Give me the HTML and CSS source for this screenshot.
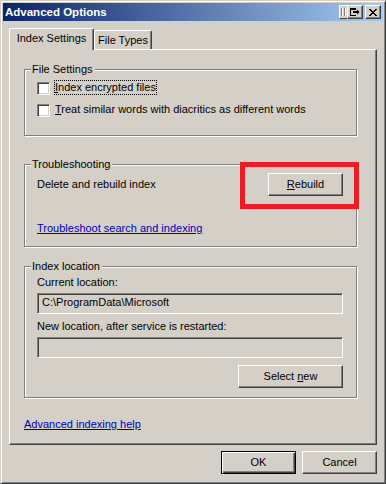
FILE: index.html
```html
<!DOCTYPE html>
<html lang="en">
<head>
    <meta charset="UTF-8">
    <title>Advanced Options</title>
    <link rel="stylesheet" href="styles.css">
</head>
<body>
    <div class="window">
        <div class="titlebar">
            <span class="title">Advanced Options</span>
            <div class="caption">
                <span class="cap-btn cap-part">
                    <svg width="5" height="8" viewBox="0 0 5 8"><path d="M0 0h1v8H0zM3 0h1v8H3z" fill="#808080"/><path d="M1 0h1v8H1zM4 0h1v8H4z" fill="#fff"/></svg>
                </span>
                <span class="cap-btn">
                    <svg width="10" height="8" viewBox="0 0 10 8"><path d="M0 0h6v2H0zM0 0h1v8H0zM0 7h6v1H0zM3 3h4v2H3zM7 1.5L9.5 4 7 6.5z" fill="#000"/></svg>
                </span>
                <span class="cap-btn cap-close">
                    <svg width="8" height="7" viewBox="0 0 8 7"><path d="M0 0h2v1H0zM6 0h2v1H6zM1 1h2v1H1zM5 1h2v1H5zM2 2h4v1H2zM3 3h2v1H3zM2 4h4v1H2zM1 5h2v1H1zM5 5h2v1H5zM0 6h2v1H0zM6 6h2v1H6z" fill="#000"/></svg>
                </span>
            </div>
        </div>

        <div class="client">
            <div class="tabs">
                <div class="tab active">Index Settings</div>
                <div class="tab">File Types</div>
            </div>

            <div class="panel">
                <fieldset class="group files">
                    <legend>File Settings</legend>
                    <div class="group-body">
                        <div class="check">
                            <span class="box"></span>
                            <span class="label focus"><u>I</u>ndex encrypted files</span>
                        </div>
                        <div class="check">
                            <span class="box"></span>
                            <span class="label"><u>T</u>reat similar words with diacritics as different words</span>
                        </div>
                    </div>
                </fieldset>

                <fieldset class="group trouble">
                    <legend>Troubleshooting</legend>
                    <div class="group-body">
                        <div class="rebuild-row">
                            <span>Delete and rebuild index</span>
                            <span class="marked">
                                <button class="btn rebuild"><u>R</u>ebuild</button>
                                <span class="mark"></span>
                            </span>
                        </div>
                        <a class="link trouble-link" href="#">Troubleshoot search and indexing</a>
                    </div>
                </fieldset>

                <fieldset class="group location">
                    <legend>Index location</legend>
                    <div class="group-body">
                        <div class="field-label">Current location:</div>
                        <div class="field">C:\ProgramData\Microsoft</div>
                        <div class="field-label second">New location, after service is restarted:</div>
                        <div class="field"></div>
                        <div class="select-row">
                            <button class="btn select">Select <u>n</u>ew</button>
                        </div>
                    </div>
                </fieldset>

                <a class="link help-link" href="#">Advanced indexing help</a>
            </div>

            <div class="actions">
                <button class="btn default">OK</button>
                <button class="btn">Cancel</button>
            </div>
        </div>
    </div>
</body>
</html>
```

FILE: styles.css
```css
* { box-sizing: border-box; }
body { margin: 0; font-family: "Liberation Sans", Arial, sans-serif; font-size: 11px; line-height: 13px; color: #000; background: #d4d0c8; }

.window {
    width: 386px;
    height: 484px;
    padding: 2px;
    background: #d4d0c8;
    border: 1px solid;
    border-color: #d4d0c8 #404040 #404040 #d4d0c8;
    box-shadow: inset 1px 1px #fff, inset -1px -1px #808080;
}

/* title bar */
.titlebar {
    height: 18px;
    display: flex;
    align-items: center;
    justify-content: space-between;
    padding: 0 2px 0 2px;
    background: linear-gradient(to right, #0a246a, #a6caf0);
}
.title { color: #fff; font-weight: bold; font-size: 11.5px; line-height: 14px; }
.caption { display: flex; align-items: center; }
.cap-btn {
    width: 16px;
    height: 14px;
    display: flex;
    align-items: center;
    justify-content: center;
    background: #d4d0c8;
    border: 1px solid;
    border-color: #fff #404040 #404040 #fff;
    box-shadow: inset -1px -1px #808080;
}
.cap-part { width: 8px; border-right: none; box-shadow: none; justify-content: flex-start; padding-left: 1px; }
.cap-close { margin-left: 2px; }

/* client area */
.client { height: 460px; padding: 7px 6px 7px 6px; }

.tabs { display: flex; align-items: flex-end; height: 21px; }
.tab {
    height: 19px;
    padding-top: 3px;
    text-align: center;
    background: #d4d0c8;
    border: 1px solid;
    border-bottom: none;
    border-color: #fff #404040 #404040 #fff;
    border-radius: 2px 2px 0 0;
    box-shadow: inset -1px 0 #808080;
}
.tab.active {
    width: 85px;
    height: 22px;
    margin-bottom: -1px;
    position: relative;
    z-index: 1;
}
.tab:not(.active) { width: 58px; }

.panel {
    height: 396px;
    padding: 13px 19px 0 14px;
    border: 1px solid;
    border-color: #fff #404040 #404040 #fff;
    box-shadow: inset -1px -1px #808080;
}

/* group boxes */
.group {
    margin: 0;
    padding: 0;
    min-width: 0;
    border: 1px solid #808080;
    box-shadow: inset 1px 1px #fff, 1px 1px #fff;
}
.group legend {
    margin-left: 6px;
    padding: 0 2px 0 1px;
    line-height: 13px;
    background: #d4d0c8;
}
.group-body { padding: 0 13px 0 12px; }

.files { height: 73px; }
.files .group-body { padding-top: 6px; }
.trouble { height: 89px; margin-top: 22px; }
.trouble .group-body { padding-top: 2px; }
.location { height: 138px; margin-top: 13px; }
.location .group-body { padding-top: 3px; }

.check { display: flex; align-items: center; height: 13px; }
.check + .check { margin-top: 9px; }
.box {
    width: 13px;
    height: 13px;
    background: #fff;
    border: 1px solid;
    border-color: #808080 #fff #fff #808080;
    box-shadow: inset 1px 1px #404040, inset -1px -1px #d4d0c8;
}
.label { margin-left: 5px; margin-top: -2px; }
.label.focus { outline: 1px dotted #000; outline-offset: 0; }

.rebuild-row { display: flex; align-items: center; justify-content: space-between; }
.marked { position: relative; display: flex; }
.mark {
    position: absolute;
    top: -11px;
    left: -28px;
    right: -16px;
    bottom: -13px;
    border: 5px solid #ed1c24;
}

.link { color: #0000b8; text-decoration: underline; }
.trouble-link { display: inline-block; margin-top: 26px; }
.help-link { display: inline-block; margin-top: 20px; }

.field-label.second { margin-top: 6px; }
.field {
    height: 21px;
    margin-top: 4px;
    padding: 0 4px;
    line-height: 17px;
    border: 1px solid;
    border-color: #808080 #fff #fff #808080;
    box-shadow: inset 1px 1px #404040, inset -1px -1px #d4d0c8;
}
.select-row { display: flex; justify-content: flex-end; margin-top: 7px; }

/* buttons */
.btn {
    width: 75px;
    height: 23px;
    padding: 0;
    font: inherit;
    color: #000;
    background: #d4d0c8;
    border: 1px solid;
    border-color: #fff #404040 #404040 #fff;
    box-shadow: inset -1px -1px #808080;
}
.btn.select { width: 105px; }
.btn.default {
    border-color: #000;
    box-shadow: inset 1px 1px #fff, inset -1px -1px #404040, inset -2px -2px #808080;
}
.actions { display: flex; justify-content: flex-end; gap: 6px; margin-top: 6px; }
```
